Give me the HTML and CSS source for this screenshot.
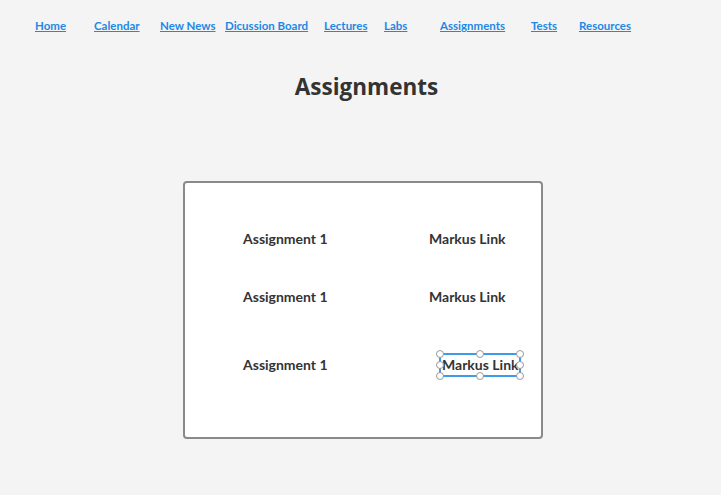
FILE: index.html
```html
<!DOCTYPE html>
<html>
<head>
<meta charset="utf-8">
<link rel="stylesheet" href="styles.css">
</head>
<body>
<nav class="nav">
  <a class="nav-link" href="#">Home</a>
  <a class="nav-link" href="#">Calendar</a>
  <a class="nav-link" href="#">New News</a>
  <a class="nav-link" href="#">Dicussion Board</a>
  <a class="nav-link" href="#">Lectures</a>
  <a class="nav-link" href="#">Labs</a>
  <a class="nav-link" href="#">Assignments</a>
  <a class="nav-link" href="#">Tests</a>
  <a class="nav-link" href="#">Resources</a>
</nav>
<h1 class="title">Assignments</h1>
<section class="card">
  <div class="row">
    <span class="cell name">Assignment 1</span>
    <span class="cell author">Markus Link</span>
  </div>
  <div class="row">
    <span class="cell name">Assignment 1</span>
    <span class="cell author">Markus Link</span>
  </div>
  <div class="row row-last">
    <span class="cell name">Assignment 1</span>
    <span class="cell author selected">
      <span class="sel-box">Markus Link
        <i class="h h-tl"></i><i class="h h-tc"></i><i class="h h-tr"></i>
        <i class="h h-ml"></i><i class="h h-mr"></i>
        <i class="h h-bl"></i><i class="h h-bc"></i><i class="h h-br"></i>
      </span>
    </span>
  </div>
</section>
</body>
</html>
```
FILE: styles.css
```css
html, body {
  margin: 0;
  padding: 0;
  background: #f4f4f4;
}
body {
  width: 721px;
  height: 495px;
  overflow: hidden;
  font-family: "Lato", "Open Sans", sans-serif;
  color: #333;
}
.nav {
  display: flex;
  padding: 18px 0 0 35px;
  height: 15px;
}
.nav-link {
  display: block;
  font-size: 11.5px;
  font-weight: 700;
  color: #1e88e5;
  text-decoration: underline;
  line-height: 15px;
  white-space: nowrap;
}
.nav-link:nth-child(1) { width: 59px; }
.nav-link:nth-child(2) { width: 66px; }
.nav-link:nth-child(3) { width: 65px; }
.nav-link:nth-child(4) { width: 99px; }
.nav-link:nth-child(5) { width: 60px; }
.nav-link:nth-child(6) { width: 56px; }
.nav-link:nth-child(7) { width: 91px; }
.nav-link:nth-child(8) { width: 48px; }
.title {
  margin: 39px 0 0 12px;
  text-align: center;
  font-family: "Open Sans", sans-serif;
  font-size: 22.5px;
  font-weight: 700;
  line-height: 30px;
  color: #333;
}
.card {
  box-sizing: border-box;
  margin: 79px 0 0 183px;
  width: 360px;
  height: 258px;
  background: #fff;
  border: 2px solid #8a8a8a;
  border-radius: 4px;
  padding: 47px 0 0 58px;
}
.row {
  display: flex;
  height: 58px;
  line-height: 18px;
}
.row-last {
  padding-top: 10px;
}
.cell {
  font-size: 14px;
  font-weight: 700;
  color: #333;
  white-space: nowrap;
}
.name {
  width: 186px;
}
.selected {
  position: relative;
  margin-left: 10px;
  margin-top: -3px;
}
.sel-box {
  position: relative;
  display: inline-block;
  box-sizing: border-box;
  border: 2px solid #3d9be9;
  padding: 1px 0 0 1px;
  width: 82px;
  height: 24px;
  line-height: 18px;
}
.h {
  position: absolute;
  box-sizing: border-box;
  width: 8px;
  height: 8px;
  border-radius: 50%;
  background: #fff;
  border: 1px solid #999;
}
.h-tl { left: -5px; top: -5px; }
.h-tc { left: 35px; top: -5px; }
.h-tr { right: -5px; top: -5px; }
.h-ml { left: -5px; top: 6px; }
.h-mr { right: -5px; top: 6px; }
.h-bl { left: -5px; bottom: -5px; }
.h-bc { left: 35px; bottom: -5px; }
.h-br { right: -5px; bottom: -5px; }
```
